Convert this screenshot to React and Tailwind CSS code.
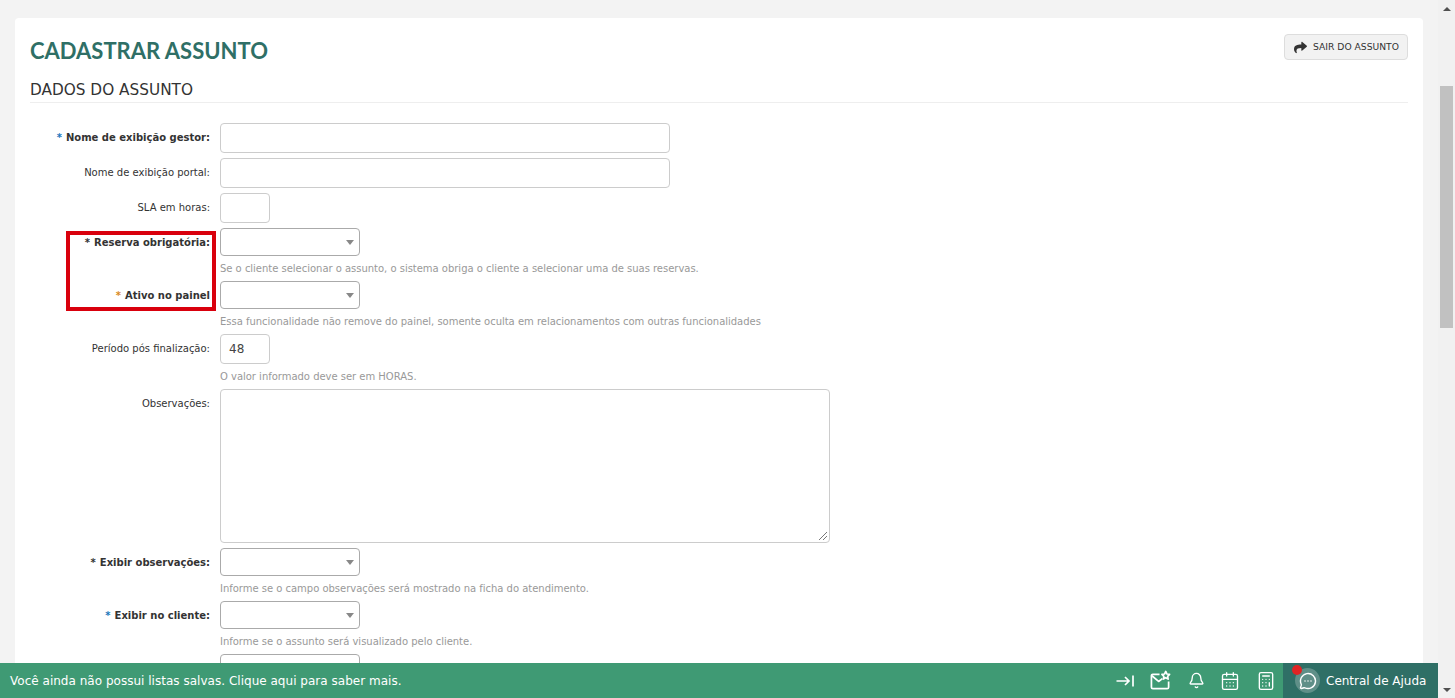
import { Bell, CalendarDays, Calculator, MessageCircleMore } from 'lucide-react';
import { FaShare } from 'react-icons/fa';

const verdana = 'font-["DejaVu_Sans",sans-serif]';

function Label({ children, star, bold, h = 'h-[28px]' }) {
  return (
    <div className={`w-[180px] ${h} shrink-0 flex items-center justify-end text-[10px] text-[#333] ${bold ? 'font-bold' : ''}`}>
      {star && <span className={`mr-1 ${star}`}>*</span>}
      {children}
    </div>
  );
}

function Select() {
  return (
    <div className="w-[140px] h-[28px] rounded-[4px] border border-[#aaa] bg-white flex items-center justify-end pr-[5px]">
      <div className="w-0 h-0 border-x-[4px] border-x-transparent border-t-[5px] border-t-[#888]" />
    </div>
  );
}

function Help({ children, mt = 'mt-[7px]' }) {
  return <p className={`text-[10px] tracking-[-0.02px] leading-[12px] text-[#999] ${mt}`}>{children}</p>;
}

function SelectRow({ label, star, help, mt }) {
  return (
    <div className={`flex gap-[10px] ${mt}`}>
      <Label star={star} bold>{label}</Label>
      <div>
        <Select />
        <Help>{help}</Help>
      </div>
    </div>
  );
}

export default function App() {
  return (
    <div className={`relative h-[698px] overflow-hidden bg-[#f3f3f3] flex ${verdana}`}>
      <main className="flex-1 min-w-0 pl-[15px] pr-[15px] pt-[18px]">
        <div className="relative bg-white rounded-[4px] px-[15px] pt-[15px] h-[800px]">
          <div className="flex justify-between items-start">
            <h1 className='font-["Lato",sans-serif] font-bold text-[22px] leading-[36px] text-[#2f6f66]'>CADASTRAR ASSUNTO</h1>
            <button className="mt-px h-[26px] w-[124px] rounded-[4px] border border-[#ddd] bg-[#f2f2f2] flex items-center pl-[9px] gap-[6px] text-[9.2px] text-[#333]">
              <FaShare className="text-[13px] text-[#333]" />
              SAIR DO ASSUNTO
            </button>
          </div>
          <h2 className="mt-[11px] pb-[2px] border-b border-[#eee] text-[15.300px] leading-[20px] text-[#333]">DADOS DO ASSUNTO</h2>

          <div className="relative mt-[20px]">
            <div className="flex gap-[10px]">
              <Label star="text-[#1b75bb]" bold h="h-[28px]">Nome de exibição gestor:</Label>
              <div className="w-[450px] h-[30px] rounded-[4px] border border-[#ccc]" />
            </div>
            <div className="flex gap-[10px] mt-[5px]">
              <Label h="h-[28px]">Nome de exibição portal:</Label>
              <div className="w-[450px] h-[30px] rounded-[4px] border border-[#ccc]" />
            </div>
            <div className="flex gap-[10px] mt-[5px]">
              <Label h="h-[28px]">SLA em horas:</Label>
              <div className="w-[50px] h-[30px] rounded-[4px] border border-[#ccc]" />
            </div>

            <SelectRow
              mt="mt-[5px]"
              star="text-[#333]"
              label="Reserva obrigatória:"
              help="Se o cliente selecionar o assunto, o sistema obriga o cliente a selecionar uma de suas reservas."
            />
            <SelectRow
              mt="mt-[6px]"
              star="text-[#d98a1f]"
              label="Ativo no painel"
              help="Essa funcionalidade não remove do painel, somente oculta em relacionamentos com outras funcionalidades"
            />

            <div className="flex gap-[10px] mt-[6px]">
              <Label h="h-[28px]">Período pós finalização:</Label>
              <div>
                <div className="w-[50px] h-[30px] rounded-[4px] border border-[#ccc] pl-[8px] flex items-center text-[12px] text-[#444]">48</div>
                <Help mt="mt-[7px]">O valor informado deve ser em HORAS.</Help>
              </div>
            </div>

            <div className="flex gap-[10px] mt-[6px]">
              <Label h="h-[28px]">Observações:</Label>
              <div className="relative w-[610px] h-[154px] rounded-[4px] border border-[#ccc]">
                <svg className="absolute right-[1px] bottom-[1px]" width="10" height="10" viewBox="0 0 10 10">
                  <path d="M9 1 1 9M9 5 5 9" stroke="#777" strokeWidth="1" fill="none" />
                </svg>
              </div>
            </div>

            <SelectRow
              mt="mt-[5px]"
              star="text-[#333]"
              label="Exibir observações:"
              help="Informe se o campo observações será mostrado na ficha do atendimento."
            />
            <SelectRow
              mt="mt-[6px]"
              star="text-[#1b75bb]"
              label="Exibir no cliente:"
              help="Informe se o assunto será visualizado pelo cliente."
            />
            <div className="flex gap-[10px] mt-[6px]">
              <div className="w-[180px] shrink-0" />
              <div className="w-[140px] h-[28px] rounded-[4px] border border-[#aaa]" />
            </div>

            {/* marcação vermelha do print */}
            <div className="absolute left-[36px] top-[108px] w-[150px] h-[80px] border-[4px] border-[#d9000d] pointer-events-none" />
          </div>
        </div>
      </main>

      <aside className="w-[17px] shrink-0 bg-[#f1f1f1] relative z-10">
        <div className="h-[17px] flex items-center justify-center">
          <div className="w-0 h-0 border-x-[4px] border-x-transparent border-b-[4px] border-b-[#505050]" />
        </div>
        <div className="mt-[69px] mx-[2px] h-[242px] bg-[#c1c1c1]" />
        <div className="absolute bottom-0 left-0 right-0 h-[17px] flex items-center justify-center">
          <div className="w-0 h-0 border-x-[4px] border-x-transparent border-t-[4px] border-t-[#505050]" />
        </div>
      </aside>

      {/* barra fixa inferior */}
      <footer className="absolute left-0 bottom-0 right-[17px] h-[35px] bg-[#3f9a74] flex items-center justify-between text-white">
        <span className="pl-[10px] text-[12px] tracking-[0.02px]">Você ainda não possui listas salvas. Clique aqui para saber mais.</span>
        <div className="flex items-center h-full">
          <div className="flex items-center gap-[16px] pr-[7px]">
            <svg width="18" height="18" viewBox="0 0 18 18" fill="none" stroke="white" strokeWidth="1.700">
              <path d="M0.500 9H13M9 5l4 4-4 4M17 3.500v11" />
            </svg>
            <svg width="21" height="21" viewBox="0 0 22 22" fill="none" stroke="white" strokeWidth="1.800" strokeLinejoin="round">
              <path d="M10 4.500H3a1.500 1.500 0 0 0-1.500 1.500V18A1.500 1.500 0 0 0 3 19.500h15a1.500 1.500 0 0 0 1.500-1.500v-6" />
              <path d="M2 6l7 6 4-3" />
              <path d="M16.500 1.500l1.300 2.700 2.700.4-2 2 .5 2.900-2.500-1.400-2.500 1.400.5-2.900-2-2 2.700-.4z" />
            </svg>
            <Bell size={17} strokeWidth={1.9} className="ml-px" />
            <CalendarDays size={20} strokeWidth={1.600} className="-ml-px" />
            <Calculator size={20} strokeWidth={1.600} />
          </div>
          <div className="w-[155px] h-full bg-[#2f6f66] flex items-center pl-[12px] gap-[6px]">
            <div className="relative w-[25px] h-[25px] rounded-full bg-[#5f8f88] flex items-center justify-center">
              <MessageCircleMore size={18} strokeWidth={1.900} />
              <div className="absolute -left-[3px] -top-[3px] w-[10px] h-[10px] rounded-full bg-[#e02424]" />
            </div>
            <span className="text-[12px]">Central de Ajuda</span>
          </div>
        </div>
      </footer>
    </div>
  );
}
